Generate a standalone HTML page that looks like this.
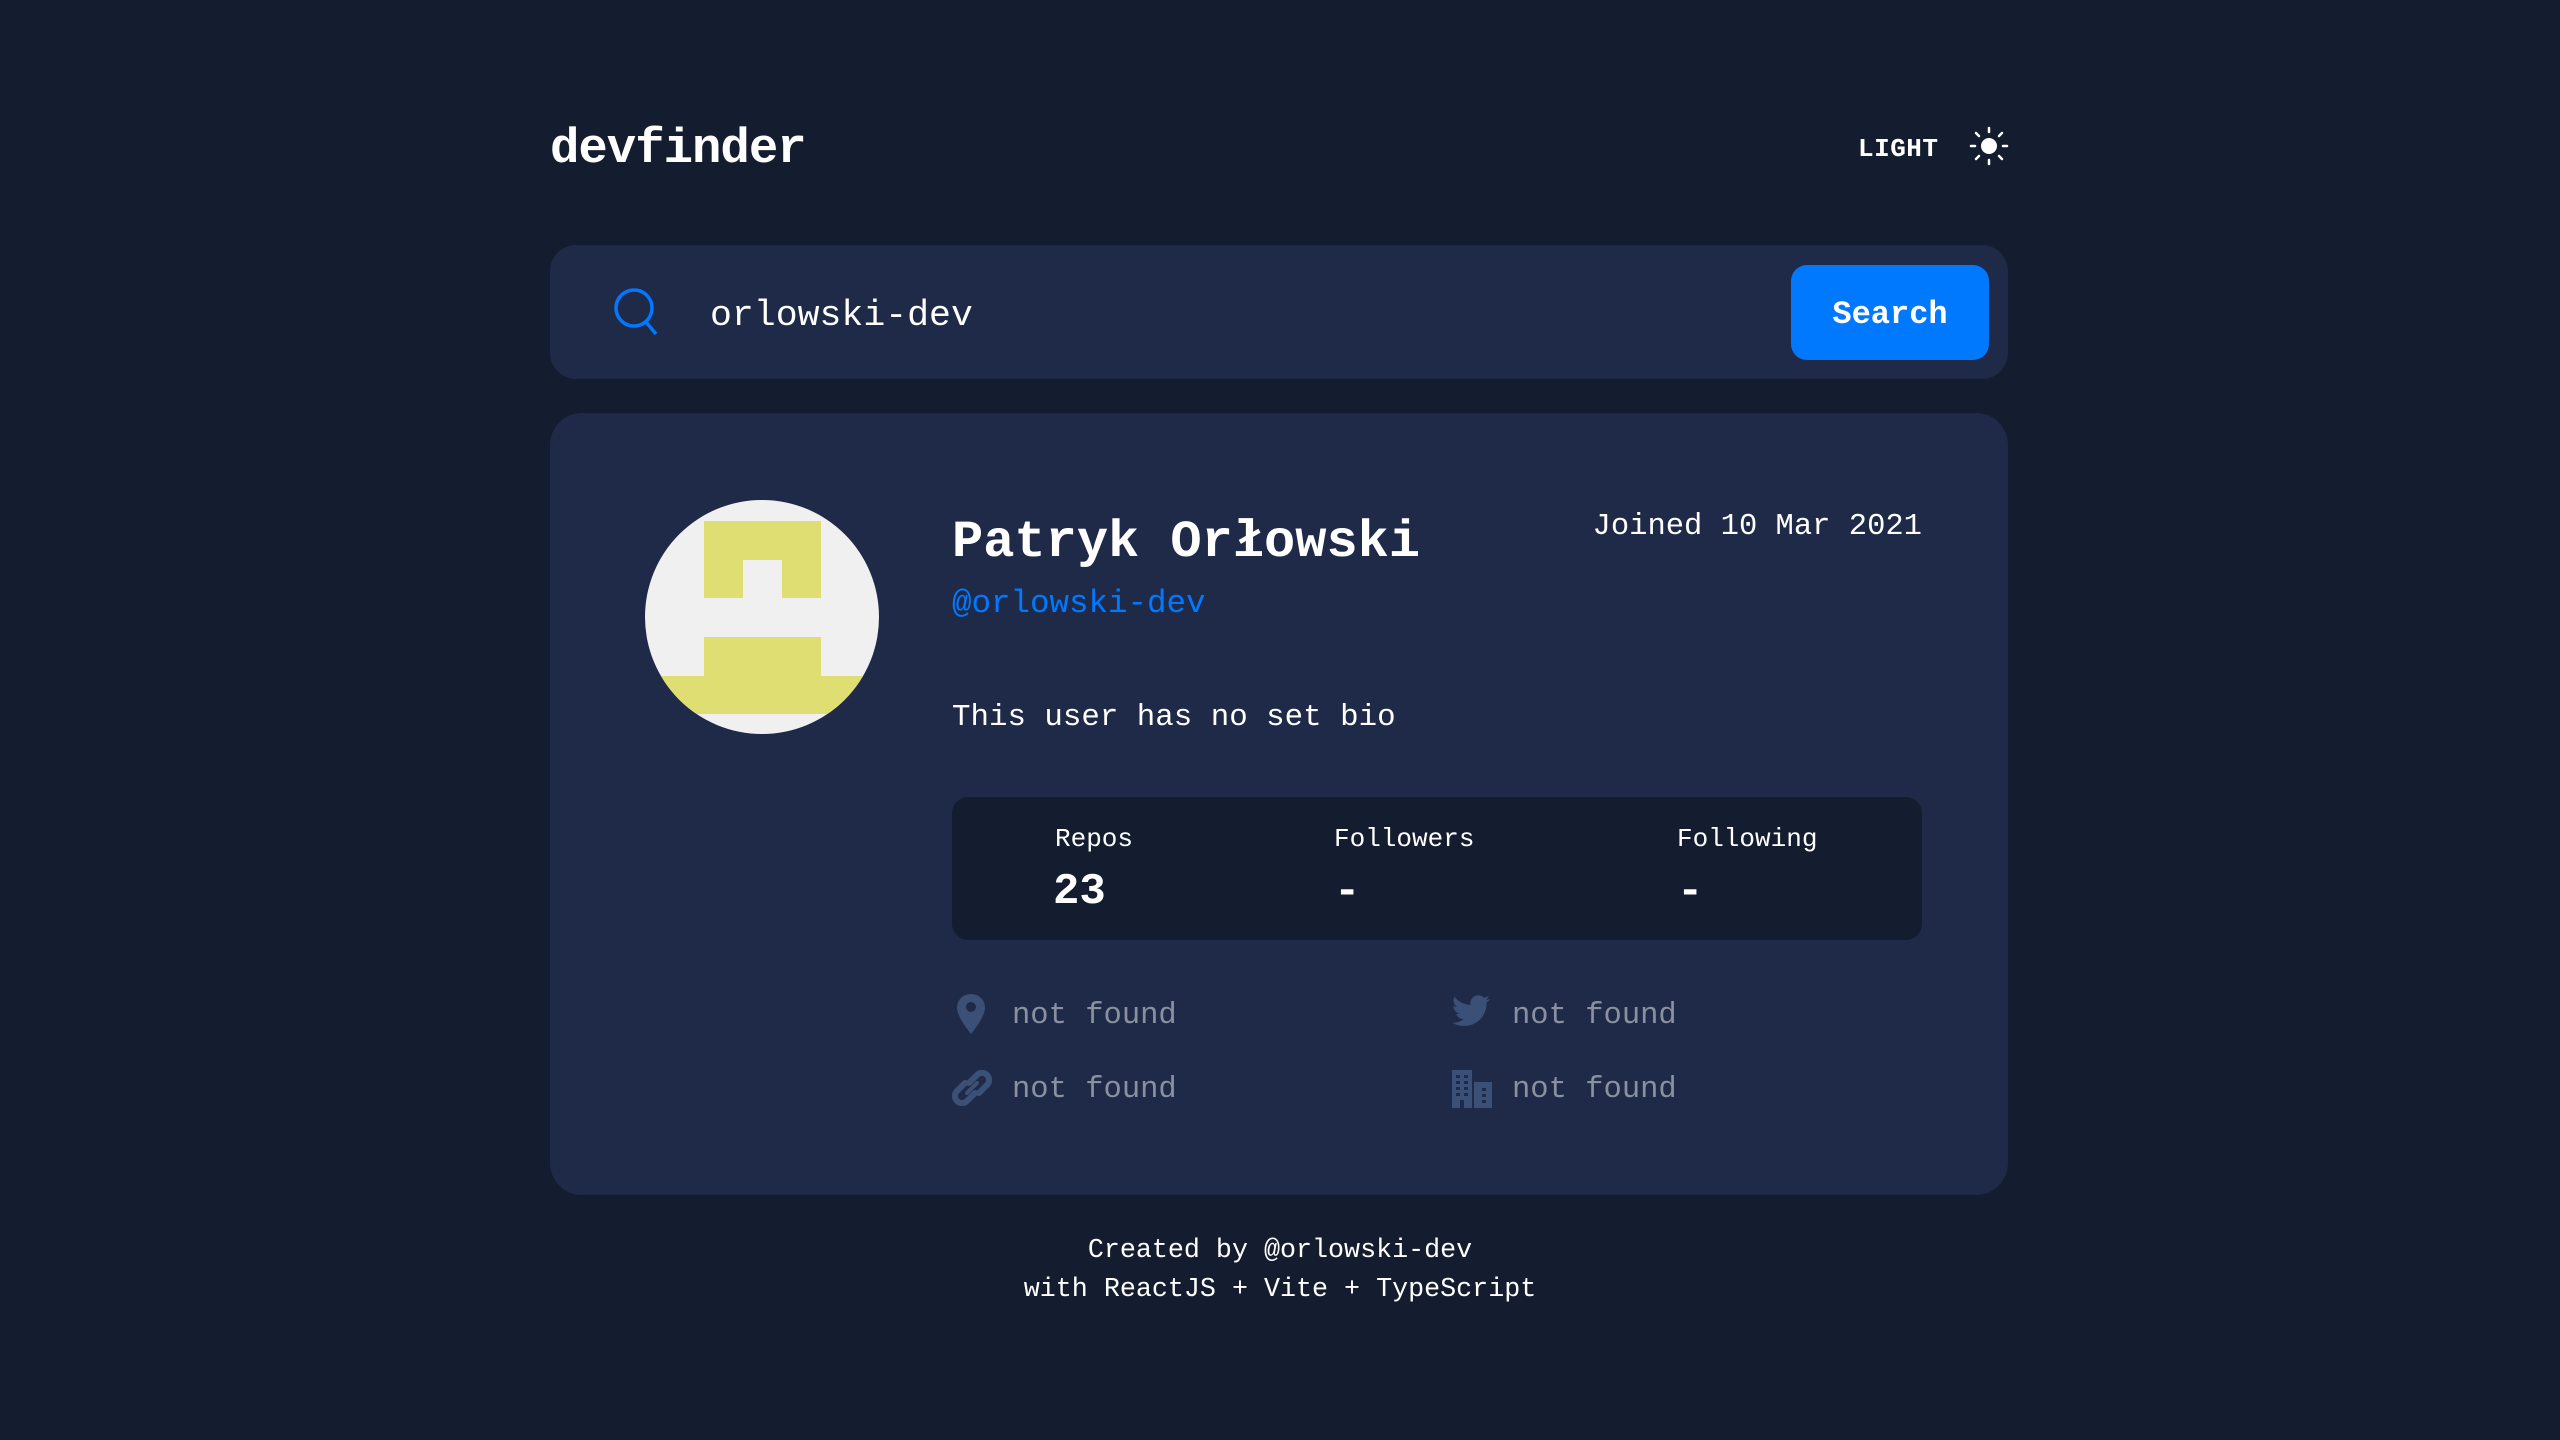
<!DOCTYPE html>
<html><head><meta charset="utf-8"><style>
*{margin:0;padding:0;box-sizing:border-box}
body{width:2560px;height:1440px;background:#141D2F;font-family:"Liberation Mono",monospace;color:#fff;position:relative;overflow:hidden}
.a{position:absolute;white-space:nowrap;line-height:1}
</style></head><body>
<div class="a" style="left:550px;top:125px;font-size:49px;font-weight:bold;letter-spacing:-1px">devfinder</div>
<div class="a" style="left:1858px;top:136px;font-size:26px;font-weight:bold;letter-spacing:0.5px">LIGHT</div>
<svg class="a" style="left:1969px;top:126px" width="40" height="40" viewBox="0 0 40 40"><circle cx="20" cy="20" r="8" fill="#fff"/><g stroke="#fff" stroke-width="2.5" stroke-linecap="round"><line x1="20" y1="2" x2="20" y2="6"/><line x1="20" y1="34" x2="20" y2="38"/><line x1="2" y1="20" x2="6" y2="20"/><line x1="34" y1="20" x2="38" y2="20"/><line x1="7" y1="7" x2="10" y2="10"/><line x1="30" y1="30" x2="33" y2="33"/><line x1="7" y1="33" x2="10" y2="30"/><line x1="30" y1="10" x2="33" y2="7"/></g></svg>
<div class="a" style="left:550px;top:245px;width:1458px;height:134px;background:#1F2A48;border-radius:26px"></div>
<svg class="a" style="left:612px;top:286px" width="50" height="52" viewBox="0 0 50 52"><circle cx="22" cy="22" r="18" fill="none" stroke="#0079FF" stroke-width="3.5"/><line x1="34" y1="36" x2="44" y2="48" stroke="#0079FF" stroke-width="3.5"/></svg>
<div class="a" style="left:710px;top:298px;font-size:36.5px">orlowski-dev</div>
<div class="a" style="left:1791px;top:265px;width:198px;height:95px;background:#0079FF;border-radius:16px;font-size:32px;font-weight:bold;text-align:center;line-height:99px">Search</div>
<div class="a" style="left:550px;top:413px;width:1458px;height:782px;background:#1F2A48;border-radius:32px"></div>
<svg class="a" style="left:645px;top:500px" width="234" height="234" viewBox="0 0 234 234"><defs><clipPath id="c"><circle cx="117" cy="117" r="117"/></clipPath></defs><g clip-path="url(#c)"><rect width="234" height="234" fill="#F0F0F0"/><path d="M59 21H176V98H137V60H98V98H59Z" fill="#DEDE72"/><path d="M59 137H176V176H234V214H0V176H59Z" fill="#DEDE72"/></g></svg>
<div class="a" style="left:952px;top:517px;font-size:52px;font-weight:bold">Patryk Orłowski</div>
<div class="a" style="left:1592px;top:512px;width:330px;text-align:right;font-size:30.5px">Joined 10 Mar 2021</div>
<div class="a" style="left:952px;top:588px;font-size:32.5px;color:#0079FF">@orlowski-dev</div>
<div class="a" style="left:952px;top:703px;font-size:30.8px">This user has no set bio</div>
<div class="a" style="left:952px;top:797px;width:970px;height:143px;background:#141D2F;border-radius:16px"></div>
<div class="a" style="left:1055px;top:826px;font-size:26px">Repos</div>
<div class="a" style="left:1334px;top:826px;font-size:26px">Followers</div>
<div class="a" style="left:1677px;top:826px;font-size:26px">Following</div>
<div class="a" style="left:1053px;top:870px;font-size:44px;font-weight:bold">23</div>
<div class="a" style="left:1334px;top:870px;font-size:44px;font-weight:bold">-</div>
<div class="a" style="left:1677px;top:870px;font-size:44px;font-weight:bold">-</div>
<svg class="a" style="left:955px;top:992px" width="32" height="44" viewBox="0 0 32 44"><path d="M16 2C8 2 2 8 2 16c0 9 14 26 14 26s14-17 14-26C30 8 24 2 16 2z" fill="#3B5077"/><circle cx="16" cy="15" r="5" fill="#1F2A48"/></svg>
<div class="a" style="left:1012px;top:1001px;font-size:30.5px;color:#8A90A0">not found</div>
<svg class="a" style="left:951px;top:1067px" width="42" height="42" viewBox="0 0 42 42"><g fill="none" stroke="#3B5077" stroke-width="6" stroke-linecap="round"><path d="M18 16l8-8a7 7 0 0 1 10 10l-8 8"/><path d="M24 26l-8 8a7 7 0 0 1-10-10l8-8"/><path d="M16 26l10-10" stroke-width="4"/></g></svg>
<div class="a" style="left:1012px;top:1075px;font-size:30.5px;color:#8A90A0">not found</div>
<svg class="a" style="left:1452px;top:995px" width="40" height="34" viewBox="0 0 40 34"><path d="M38 4c-1.4.6-2.9 1-4.5 1.2 1.6-1 2.8-2.5 3.4-4.3-1.5.9-3.2 1.5-5 1.9A7.8 7.8 0 0 0 18.6 10C12 9.7 6.3 6.6 2.5 1.900c-2 3.5-.8 7.8 2.4 10-1.3 0-2.5-.4-3.5-1 0 3.8 2.7 7 6.3 7.7-1.2.3-2.4.4-3.5.1 1 3.1 3.9 5.3 7.3 5.4C8.4 26.8 4.4 28 0 27.5 3.5 29.7 7.6 31 12 31c14.6 0 22.6-12.1 22.6-22.6v-1C36 6.6 37.3 5.4 38 4z" fill="#3B5077"/></svg>
<div class="a" style="left:1512px;top:1001px;font-size:30.5px;color:#8A90A0">not found</div>
<svg class="a" style="left:1452px;top:1068px" width="40" height="40" viewBox="0 0 40 40"><path d="M0 2h20v38H0zM22 14h18v26H22z" fill="#3B5077"/><g fill="#1F2A48"><rect x="4" y="7" width="4" height="3"/><rect x="12" y="7" width="4" height="3"/><rect x="4" y="13" width="4" height="3"/><rect x="12" y="13" width="4" height="3"/><rect x="4" y="19" width="4" height="3"/><rect x="12" y="19" width="4" height="3"/><rect x="4" y="25" width="4" height="3"/><rect x="12" y="25" width="4" height="3"/><rect x="8" y="32" width="4" height="8"/><rect x="30" y="20" width="4" height="3"/><rect x="30" y="26" width="4" height="3"/><rect x="30" y="32" width="4" height="3"/></g></svg>
<div class="a" style="left:1512px;top:1075px;font-size:30.5px;color:#8A90A0">not found</div>
<div class="a" style="left:0;top:1238px;width:2560px;text-align:center;font-size:26.7px">Created by @orlowski-dev</div>
<div class="a" style="left:0;top:1277px;width:2560px;text-align:center;font-size:26.7px">with ReactJS + Vite + TypeScript</div>
</body></html>
